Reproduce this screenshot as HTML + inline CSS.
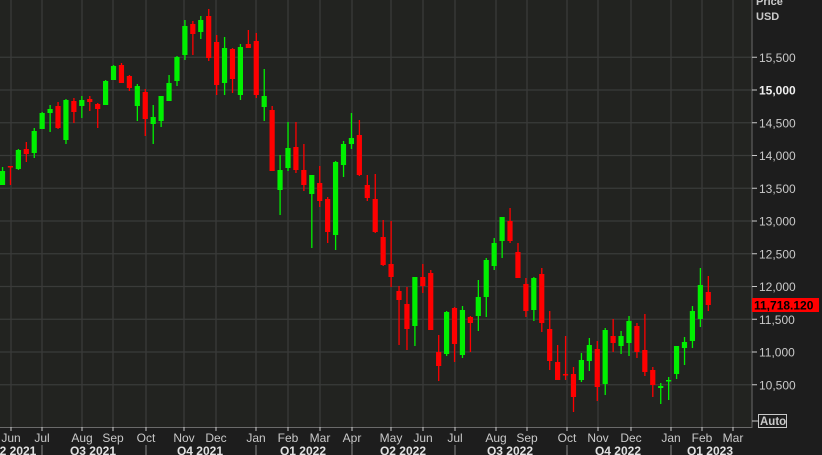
<!DOCTYPE html>
<html><head><meta charset="utf-8"><style>
html,body{margin:0;padding:0;background:#1d1d1d;width:822px;height:455px;overflow:hidden}
svg{display:block;font-family:"Liberation Sans",Tahoma,sans-serif}
</style></head><body>
<svg id="s" width="822" height="455" viewBox="0 0 822 455" xmlns="http://www.w3.org/2000/svg">
<rect x="0" y="0" width="822" height="455" fill="#1d1d1d"/>
<rect x="0" y="0" width="752" height="427" fill="#222320"/>
<g id="grid" stroke="#3a3b39" stroke-width="1.3"></g>
<g id="c"></g>
<line x1="752" y1="0" x2="752" y2="428" stroke="#6a6a6a" stroke-width="1"/>
<line x1="0" y1="427.5" x2="752" y2="427.5" stroke="#6a6a6a" stroke-width="1"/>
<g id="ax" fill="#c9c9c9" font-size="12"></g>
<text x="756" y="5" fill="#c9c9c9" font-size="11" font-weight="bold">Price</text>
<text x="756" y="20" fill="#c9c9c9" font-size="11" font-weight="bold">USD</text>
<rect x="752" y="298" width="67" height="14" fill="#ff0000"/>
<text x="754" y="309.5" fill="#000" font-size="12" font-weight="bold">11,718.120</text>
<line x1="752" y1="421" x2="758" y2="421" stroke="#c9c9c9"/>
<rect x="758.5" y="414.5" width="28" height="13" fill="none" stroke="#c9c9c9"/>
<text x="760" y="425" fill="#c9c9c9" font-size="11.5" font-weight="bold">Auto</text>
</svg>
<script>
var NS="http://www.w3.org/2000/svg";
function el(p,t,a,txt){var e=document.createElementNS(NS,t);for(var k in a)e.setAttribute(k,a[k]);if(txt)e.textContent=txt;p.appendChild(e);return e;}
var g=document.getElementById('grid'),c=document.getElementById('c'),ax=document.getElementById('ax');
var prices=[15500,15000,14500,14000,13500,13000,12500,12000,11500,11000,10500];
prices.forEach(function(p){var y=90+(15000-p)/500*32.75;
 el(g,'line',{x1:0,y1:y,x2:752,y2:y});
 el(ax,'line',{x1:752,y1:y,x2:757,y2:y,stroke:'#c9c9c9'});
 var t=el(ax,'text',{x:759,y:y+4.5},p.toLocaleString('en-US'));
 if(p==15000){t.setAttribute('font-weight','bold');t.setAttribute('fill','#eee');}
});
var months=[["Jun",11],["Jul",42],["Aug",82],["Sep",113],["Oct",146],["Nov",184],["Dec",216],["Jan",256],["Feb",288],["Mar",320],["Apr",352],["May",391],["Jun",423],["Jul",455],["Aug",496],["Sep",527],["Oct",567],["Nov",598],["Dec",631],["Jan",671],["Feb",702],["Mar",733]];
months.forEach(function(m){
 el(g,'line',{x1:m[1],y1:0,x2:m[1],y2:427});
 el(ax,'line',{x1:m[1],y1:427,x2:m[1],y2:431,stroke:'#c9c9c9'});
 el(ax,'text',{x:m[1],y:442,'text-anchor':'middle'},m[0]);
});
[42,146,256,352,455,567,671].forEach(function(x){el(ax,'line',{x1:x,y1:445,x2:x,y2:455,stroke:'#888'});});
var q=[["2 2021",18],["Q3 2021",93],["Q4 2021",200],["Q1 2022",303],["Q2 2022",403],["Q3 2022",510],["Q4 2022",618],["Q1 2023",710]];
q.forEach(function(a){el(ax,'text',{x:a[1],y:455,'text-anchor':'middle','font-weight':'bold',fill:'#e0e0e0'},a[0]);});
var d=[
['g',171,185,167,185],['r',166,167.5,166,185],['g',150,169,149,170],['r',149,154,142,162],['g',131,153,128,158],
['g',113,129,112,129],['g',109,113,105,132],['r',106,128,102,129],['g',100,140,99,144],['r',101,112,98,123],
['g',100,106,96,118],['r',99,102,96,111],['r',104,109,103,128],['g',81,105,80,105],['g',66,80,65,80],
['r',65,83,63,83],['r',76,88,75,91],['g',86,106,84,121],['r',92,119,89,136],['g',117,124,105,144],
['g',96,121,96,127],['g',83,101,75,101],['g',57,81,56,86],['g',26,55,20,60],['r',24,34,21,55],
['g',20,32,16,39],['r',16,58,9,61],['r',42,85,35,95],['g',48,83,37,95],['r',49,79,48,93],
['g',47,95,44,100],['r',44,48,30,48],['r',41,95,33,98],['g',96,107,69,121],['r',110,171,106,171],
['g',170,190,155,215],['g',148,168,122,171],['r',147,170,122,173],['r',170,185,144,191],['g',175,194,175,248],
['r',183,201,166,207],['r',199,232,197,243],['g',162,235,161,250],['g',144,165,141,177],['g',138,144,113,149],
['r',135,175,120,176],['r',185,198,175,201],['r',199,232,174,233],['r',237,265,220,266],['r',264,277,221,287],
['r',291,300,286,345],['r',304,329,287,350],['g',277,326,277,346],['r',277,286,264,293],['r',273,330,270,330],
['r',352,366,335,381],['g',312,354,311,356],['r',308,344,307,362],['g',310,355,306,358],['r',317,323,316,352],
['g',297,316,280,331],['g',260,297,258,317],['g',243,266,238,270],['g',217,241,217,258],['r',221,241,208,243],
['r',252,278,243,278],['r',284,311,278,317],['g',278,310,277,321],['r',274,323,268,332],['r',329,361,311,370],
['r',362,380,345,380],['r',374,375.5,336,380],['r',374,397,367,412],['g',360,380,353,382],['g',345,361,338,371],
['r',349,387,341,401],['g',330,384,328,395],['r',336,343,319,352],['g',336,346,331,354],['g',321,343,316,356],
['r',326,352,323,358],['r',350,372,314,376],['r',370,385,367,397],['g',386,388,383,404],['g',380,381.5,377,400],
['g',346,374,346,379],['g',342,348,337,365],['g',311,341,306,348],['g',285,319,268,327],['r',292,305,276,311]];
d.forEach(function(k,i){var x=2.5+i*7.93;var col=k[0]=='g'?'#00f000':'#ff0000';
 el(c,'rect',{x:x-0.6,y:k[3],width:1.3,height:k[4]-k[3],fill:col});
 el(c,'rect',{x:x-2.6,y:k[1],width:5.2,height:Math.max(1.5,k[2]-k[1]),fill:col});
});
</script>
</body></html>
